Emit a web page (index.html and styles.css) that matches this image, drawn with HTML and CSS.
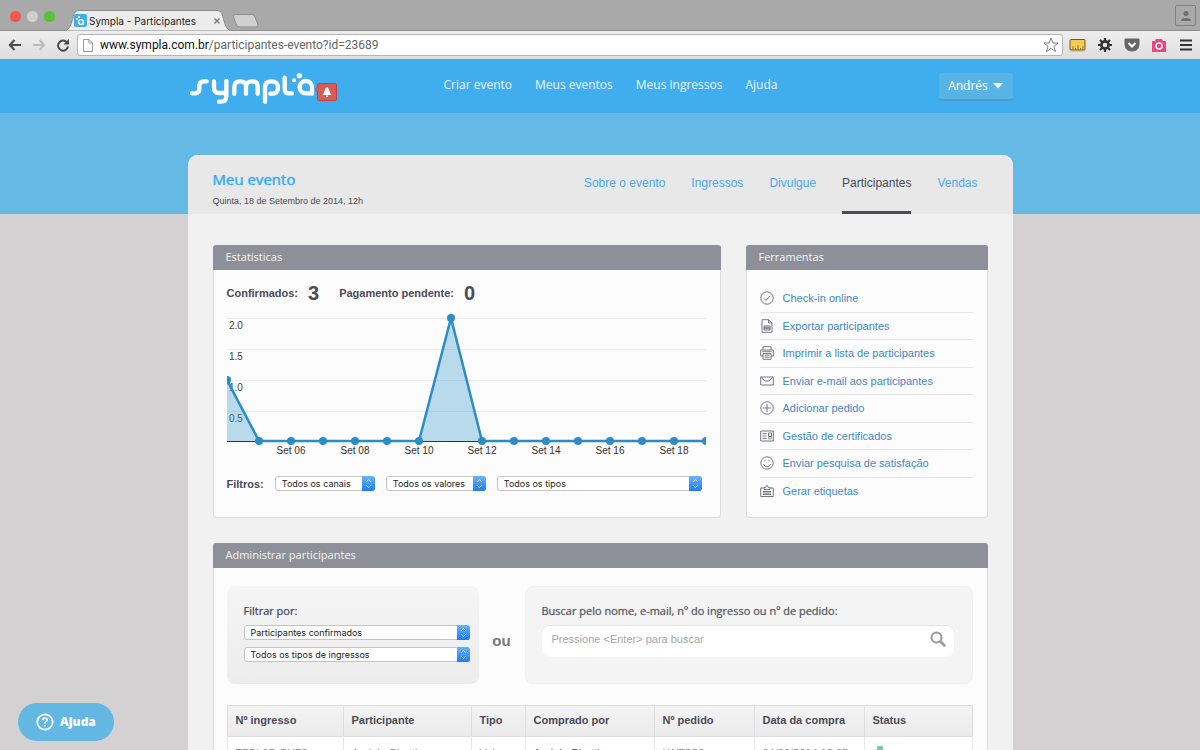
FILE: index.html
```html
<!DOCTYPE html>
<html lang="pt-BR">
<head>
<meta charset="utf-8">
<title>Sympla - Participantes</title>
<link rel="stylesheet" href="styles.css">
</head>
<body>
<div class="tabstrip">
  <div class="lights"><span class="light red"></span><span class="light gray"></span><span class="light green"></span></div>
  <div class="tab">
    <svg class="tab-shape" width="168" height="21" viewBox="0 0 168 21" aria-hidden="true"><path d="M0 21C5 20 6 17 8 11C10 4 10 1 15 .5H153C158 1 158 4 160 11C162 17 163 20 168 21Z" fill="#ececec" stroke="#8c8c8c"/></svg>
    <svg width="13" height="13" viewBox="0 0 13 13" aria-hidden="true"><rect width="13" height="13" rx="2" fill="#3fadee"/><circle cx="7" cy="8" r="2.4" fill="none" stroke="#fff" stroke-width="1.4"/><path d="M9.4 6V11" stroke="#fff" stroke-width="1.3"/><circle cx="3" cy="5" r=".9" fill="#fff"/><circle cx="5" cy="3" r="1" fill="#fff"/></svg>
    <span class="tab-title">Sympla - Participantes</span>
    <button class="tab-close" aria-label="Fechar aba"><svg width="6" height="6" viewBox="0 0 6 6"><path d="M.5 .5L5.500 5.500M5.500 .5L.5 5.500" stroke="#777" stroke-width="1.300"/></svg></button>
  </div>
  <button class="new-tab" aria-label="Nova aba"><svg width="27" height="14" viewBox="0 0 27 14"><path d="M3 .5H20Q22 .5 23 3L26 11Q26.500 13 24 13H8Q5.500 13 4.500 11L1.500 3Q1 .5 3 .5Z" fill="#d0d0d0" stroke="#8c8c8c"/></svg></button>
  <button class="profile" aria-label="Perfil"><svg width="12" height="12" viewBox="0 0 12 12"><circle cx="6" cy="3.500" r="2.500" fill="#707070"/><path d="M1 11Q1 8 6 8T11 11Z" fill="#707070"/></svg></button>
</div>
<div class="toolbar">
  <button class="tool" aria-label="Voltar"><svg width="14" height="14" viewBox="0 0 14 14"><path d="M13 7H2M6.500 2L1.800 7L6.500 12" fill="none" stroke="#4a4a4a" stroke-width="2"/></svg></button>
  <button class="tool" aria-label="Avançar"><svg width="14" height="14" viewBox="0 0 14 14"><path d="M1 7H12M7.500 2L12.200 7L7.500 12" fill="none" stroke="#bcbcbc" stroke-width="2"/></svg></button>
  <button class="tool" aria-label="Recarregar"><svg width="14" height="14" viewBox="0 0 14 14"><path d="M11 4.500A5 5 0 1 0 12 8.500" fill="none" stroke="#4a4a4a" stroke-width="2"/><path d="M13 1V6.500H7.500Z" fill="#4a4a4a"/></svg></button>
  <div class="address">
    <svg width="10" height="13" viewBox="0 0 10 13" aria-hidden="true"><path d="M.5 .5H6L9.500 4V12.500H.5ZM6 .5V4H9.500" fill="#fafafa" stroke="#999"/></svg>
    <span class="url"><b>www.sympla.com.br</b>/participantes-evento?id=23689</span>
    <button class="star" aria-label="Favoritar"><svg width="16" height="16" viewBox="0 0 16 16"><path d="M8 1L10 6H15L11 9.300L12.500 14.500L8 11.400L3.500 14.500L5 9.300L1 6H6Z" fill="#fff" stroke="#808080"/></svg></button>
  </div>
  <button class="tool ext" aria-label="Régua"><svg width="17" height="14" viewBox="0 0 17 14"><path d="M1 13.500H16" stroke="#ccc"/><rect x="1" y="1.500" width="15" height="10.500" rx="1" fill="#f4cc55" stroke="#6f5717"/><path d="M4 12V8M6.500 12V10M9 12V7M11.500 12V10M14 12V8" stroke="#a07a20"/></svg></button>
  <button class="tool ext" aria-label="Configurações"><svg width="16" height="16" viewBox="0 0 16 16"><circle cx="8" cy="8" r="3.600" fill="none" stroke="#333" stroke-width="2.600"/><path d="M8 1V4M8 12V15M1 8H4M12 8H15M3 3L5 5M11 11L13 13M13 3L11 5M5 11L3 13" stroke="#333" stroke-width="2.200"/></svg></button>
  <button class="tool ext" aria-label="Pocket"><svg width="16" height="14" viewBox="0 0 16 14"><path d="M1 1H15V6Q15 13 8 13T1 6Z" fill="#666" stroke="#666"/><path d="M4.500 5L8 8.500L11.500 5" fill="none" stroke="#fff" stroke-width="2"/></svg></button>
  <button class="tool ext" aria-label="Captura"><svg width="14" height="13" viewBox="0 0 14 13"><path d="M0 2H3L4 0H10L11 2H14V13H0Z" fill="#f2427f"/><circle cx="7" cy="7" r="3" fill="none" stroke="#fff" stroke-width="1.500"/></svg></button>
  <button class="tool menu" aria-label="Menu"><svg width="12" height="12" viewBox="0 0 12 12"><path d="M0 1.500H12M0 6H12M0 10.500H12" stroke="#333" stroke-width="2"/></svg></button>
</div>

<div class="site">
  <header class="site-header">
    <div class="wrap header-row">
      <a class="logo" href="#" aria-label="Sympla">
        <svg width="128" height="33" viewBox="24 36 384 99" fill="none" stroke="#fff" stroke-width="13" stroke-linecap="round" stroke-linejoin="round"><path d="M36 100H46Q58 99 58 88V78Q58 64 71 64H80M102 64V84Q102 99 117 99H138M139 63V108Q139 125 124 125H117M163 101V80Q163 64 181 64Q198 64 198 80V101M198 80Q198 64 216 64Q233 64 233 80V101M255 125V82Q255 64 274 64Q294 64 294 83T274 101H271M314 53V86Q314 100 328 100H336M396 101V82A18.500 18.500 0 1 0 377 100H396"/><circle cx="342" cy="61" r="6" fill="#fff" stroke="none"/><circle cx="358" cy="47" r="8" fill="#fff" stroke="none"/></svg>
        <span class="alert"><svg width="22" height="18" viewBox="0 0 22 18"><path d="M0 6.500L2.500 4V1.500Q2.500 .5 3.500 .5H20.500Q21.500 .5 21.500 1.500V16.500Q21.500 17.500 20.500 17.500H3.500Q2.500 17.500 2.500 16.500V9Z" fill="#da5a56" stroke="#b94643"/><path d="M7.500 12Q9.500 10 9.700 7Q10 5 11.500 5V4H12.500V5Q14 5 14.300 7Q14.500 10 16.500 12ZM11 12.500H13V14H11Z" fill="#fff"/></svg></span>
      </a>
      <nav class="main-nav"><a href="#">Criar evento</a><a href="#">Meus eventos</a><a href="#">Meus ingressos</a><a href="#">Ajuda</a></nav>
      <button class="user">Andrés <svg width="10" height="6" viewBox="0 0 10 6"><path d="M0 0H10L5 5.500Z" fill="#fff"/></svg></button>
    </div>
  </header>
  <div class="stage">
    <main class="wrap sheet">
      <div class="event-head">
        <div>
          <h1>Meu evento</h1>
          <p class="date">Quinta, 18 de Setembro de 2014, 12h</p>
        </div>
        <nav class="event-nav"><a href="#">Sobre o evento</a><a href="#">Ingressos</a><a href="#">Divulgue</a><a class="active" href="#">Participantes</a><a href="#">Vendas</a></nav>
      </div>
      <div class="content">
        <div class="top-row">
          <section class="panel stats">
            <h2>Estatísticas</h2>
            <div class="stats-body">
              <div class="totals"><span>Confirmados:</span><strong>3</strong><span>Pagamento pendente:</span><strong>0</strong></div>
              <svg class="chart" viewBox="0 0 479 150" role="img" aria-label="Participantes por dia">
                <path d="M0 6.500H479M0 37.500H479M0 68.500H479M0 99.500H479" stroke="#ececee"/>
                <g class="labels"><text x="2" y="17">2.0</text><text x="2" y="48">1.5</text><text x="2" y="79">1.0</text><text x="2" y="110">0.5</text></g>
                <path d="M0 129.500H479" stroke="#333"/>
                <path d="M0 68L32 129H0ZM192 129L224 6L255 129Z" fill="#3a9bcb" fill-opacity=".35"/>
                <path d="M0 68L32 129H192L224 6L255 129H479" fill="none" stroke="#2b8dc6" stroke-width="2.500" stroke-linejoin="round"/>
                <g fill="#2b8dc6"><circle cx="0" cy="68" r="4"/><circle cx="32" cy="129" r="4"/><circle cx="64" cy="129" r="4"/><circle cx="96" cy="129" r="4"/><circle cx="128" cy="129" r="4"/><circle cx="160" cy="129" r="4"/><circle cx="192" cy="129" r="4"/><circle cx="224" cy="6" r="4"/><circle cx="255" cy="129" r="4"/><circle cx="287" cy="129" r="4"/><circle cx="319" cy="129" r="4"/><circle cx="351" cy="129" r="4"/><circle cx="383" cy="129" r="4"/><circle cx="415" cy="129" r="4"/><circle cx="447" cy="129" r="4"/><circle cx="479" cy="129" r="4"/></g>
                <g class="labels days"><text x="64" y="142">Set 06</text><text x="128" y="142">Set 08</text><text x="192" y="142">Set 10</text><text x="255" y="142">Set 12</text><text x="319" y="142">Set 14</text><text x="383" y="142">Set 16</text><text x="447" y="142">Set 18</text></g>
              </svg>
              <div class="filters">
                <span class="filters-label">Filtros:</span>
                <span class="select narrow"><select aria-label="Canais"><option>Todos os canais</option></select><svg viewBox="0 0 12 15"><path d="M3.500 6L6 3.500L8.500 6M3.500 9L6 11.500L8.500 9"/></svg></span>
                <span class="select narrow"><select aria-label="Valores"><option>Todos os valores</option></select><svg viewBox="0 0 12 15"><path d="M3.500 6L6 3.500L8.500 6M3.500 9L6 11.500L8.500 9"/></svg></span>
                <span class="select wide"><select aria-label="Tipos"><option>Todos os tipos</option></select><svg viewBox="0 0 12 15"><path d="M3.500 6L6 3.500L8.500 6M3.500 9L6 11.500L8.500 9"/></svg></span>
              </div>
            </div>
          </section>
          <section class="panel tools">
            <h2>Ferramentas</h2>
            <ul>
              <li><svg viewBox="0 0 14 14"><circle cx="7" cy="7" r="6.200"/><path d="M4 7.500L6 9.500L10 5"/></svg><a href="#">Check-in online</a></li>
              <li><svg viewBox="0 0 14 14"><path d="M2 .7H8.500L12 4V13.300H2ZM8.500 .7V4H12M4 7H10V11H4ZM4 8.300H10M4 9.700H10"/></svg><a href="#">Exportar participantes</a></li>
              <li><svg viewBox="0 0 14 14"><path d="M3 4V.7H11V4M3 10H.7V4H13.300V10H11M3 7.500H11V13.300H3ZM4.500 9.200H9.500M4.500 11.200H9.500M2.500 5.700H11.500"/></svg><a href="#">Imprimir a lista de participantes</a></li>
              <li><svg viewBox="0 0 14 14"><path d="M.7 3H13.300V11H.7ZM.7 3L5 7H9L13.300 3"/></svg><a href="#">Enviar e-mail aos participantes</a></li>
              <li><svg viewBox="0 0 14 14"><circle cx="7" cy="7" r="6.200"/><path d="M7 3V11M3 7H11"/></svg><a href="#">Adicionar pedido</a></li>
              <li><svg viewBox="0 0 14 14"><path d="M.7 2H13.300V12H.7ZM2.500 4.500H6.500M2.500 7H6.500M2.500 9.500H6.500M8.500 4H11.500V7.500H8.500ZM9 8V10.500M11 8V10.500"/></svg><a href="#">Gestão de certificados</a></li>
              <li><svg viewBox="0 0 14 14"><circle cx="7" cy="7" r="6.200"/><path d="M3.500 8Q4.500 10.800 7 10.800T10.500 8M5 4V5.500M9 4V5.500"/></svg><a href="#">Enviar pesquisa de satisfação</a></li>
              <li><svg viewBox="0 0 14 14"><path d="M4 4H.7V12.500H13.300V4H10M4 5.500V3.500H5.500L7 1.200L8.500 3.500H10V5.500ZM3 7.500H11M3 9H11M3 10.500H11"/></svg><a href="#">Gerar etiquetas</a></li>
            </ul>
          </section>
        </div>
        <section class="panel manage">
          <h2>Administrar participantes</h2>
          <div class="manage-body">
            <div class="search-row">
              <div class="box filter-box">
                <label for="situacao">Filtrar por:</label>
                <span class="select"><select id="situacao"><option>Participantes confirmados</option></select><svg viewBox="0 0 12 15"><path d="M3.500 6L6 3.500L8.500 6M3.500 9L6 11.500L8.500 9"/></svg></span>
                <span class="select"><select aria-label="Tipo de ingresso"><option>Todos os tipos de ingressos</option></select><svg viewBox="0 0 12 15"><path d="M3.500 6L6 3.500L8.500 6M3.500 9L6 11.500L8.500 9"/></svg></span>
              </div>
              <span class="or">ou</span>
              <div class="box search-box">
                <label for="busca">Buscar pelo nome, e-mail, nº do ingresso ou nº de pedido:</label>
                <div class="search-field">
                  <input id="busca" type="text" placeholder="Pressione &lt;Enter&gt; para buscar">
                  <button aria-label="Buscar"><svg width="16" height="16" viewBox="0 0 16 16" fill="none" stroke="#999"><circle cx="6.500" cy="6.500" r="5" stroke-width="2"/><path d="M10.500 10.500L14.500 14.500" stroke-width="2.500" stroke-linecap="round"/></svg></button>
                </div>
              </div>
            </div>
            <table>
              <colgroup><col class="c1"><col class="c2"><col class="c3"><col class="c4"><col class="c5"><col class="c6"><col class="c7"></colgroup>
              <thead><tr><th>Nº ingresso</th><th>Participante</th><th>Tipo</th><th>Comprado por</th><th>Nº pedido</th><th>Data da compra</th><th>Status</th></tr></thead>
              <tbody><tr><td>TFBL9D-BYF8</td><td>Andrés Bhatti</td><td>Vale</td><td class="buyer">Andrés Bhatti</td><td>LWF8S8</td><td>04/09/2014 18:25</td><td><span class="mark"></span>Confirmado</td></tr></tbody>
            </table>
          </div>
        </section>
      </div>
    </main>
  </div>
</div>
<button class="help"><svg width="18" height="18" viewBox="0 0 18 18" fill="none" stroke="#fff"><circle cx="9" cy="9" r="7.700" stroke-width="1.700"/><path d="M6.800 7.300Q6.800 5 9 5T11.200 7Q11.200 8 10 8.700T9 10.500M9 12V13.500" stroke-width="1.500"/></svg>Ajuda</button>
</body>
</html>
```
FILE: styles.css
```css
* { box-sizing: border-box; }
body {
  margin: 0;
  height: 100vh;
  display: flex;
  flex-direction: column;
  overflow: hidden;
  font-family: "Liberation Sans", Arial, sans-serif;
  font-size: 11px;
  color: #4a4b59;
}
h1, h2, p, ul { margin: 0; padding: 0; }
a { text-decoration: none; }
button { border: 0; padding: 0; background: none; font: inherit; color: inherit; }
svg { display: block; flex: none; }

/* Browser window */
.tabstrip {
  display: flex;
  align-items: flex-end;
  height: 31px;
  flex: none;
  background: #a9a9a9;
  border-bottom: 1px solid #8c8c8c;
}
.lights { display: flex; gap: 6px; padding: 0 9px 8px 10px; }
.light { width: 11px; height: 11px; border-radius: 50%; }
.red { background: #f0564f; }
.gray { background: #d0d0d0; }
.green { background: #57c038; }
.tab {
  position: relative;
  display: flex;
  align-items: center;
  gap: 2px;
  width: 168px;
  height: 21px;
  padding: 0 10px;
  margin-bottom: -1px;
  font: 10px/14px Inter, sans-serif;
  color: #222;
}
.tab > * { position: relative; }
.tab .tab-shape { position: absolute; left: 0; top: 0; }
.tab-title { white-space: nowrap; }
.tab-close { margin-left: auto; margin-right: 2px; }
.new-tab { margin-bottom: 2px; }
.profile {
  display: grid;
  place-items: center;
  width: 21px;
  height: 21px;
  margin: 0 4px 4px auto;
  border: 1px solid #808080;
  border-radius: 2px;
}
.toolbar {
  display: flex;
  align-items: center;
  height: 29px;
  flex: none;
  padding: 0 8px;
  gap: 10px;
  background: linear-gradient(#eeeeee, #dedede);
  border-bottom: 1px solid #8b969d;
}
.address {
  display: flex;
  align-items: center;
  flex: 1;
  height: 22px;
  margin: 0 -4px 0 -3px;
  padding: 0 3px 0 5px;
  gap: 7px;
  background: #fff;
  border: 1px solid #b5b5b5;
  border-radius: 3px;
}
.url { font: 12px/16px Roboto, sans-serif; color: #666; }
.url b { font-weight: 400; color: #111; }
.star { margin-left: auto; }
.toolbar .ext { width: 17px; display: flex; justify-content: center; }
.menu { margin-left: 3px; }

/* Site header */
.site { flex: 1; min-height: 0; overflow: hidden; background: #d3d1d2; }
.wrap { width: 100%; max-width: 825px; margin: 0 auto; }
.site-header { background: #3fadee; }
.header-row { display: flex; align-items: flex-start; height: 53px; }
.logo { display: flex; padding: 12px 0 0; }
.alert { margin-top: 11px; margin-left: -1px; }
.main-nav {
  display: flex;
  gap: 23px;
  margin-left: 107px;
  padding-top: 16px;
  font: 12px/18px "Open Sans", sans-serif;
}
.main-nav a { color: #e8f6ff; }
.user {
  display: flex;
  align-items: center;
  justify-content: center;
  gap: 5px;
  width: 74px;
  height: 28px;
  margin: 13px 0 0 auto;
  border-radius: 3px;
  background: #58b4e4;
  border-bottom: 2px solid #489cca;
  color: #fff;
  font: 12px/18px "Open Sans", sans-serif;
}
.stage {
  padding-top: 42px;
  background: linear-gradient(#64b9e5, #64b9e5) no-repeat 0 0 / 100% 101px;
}

/* Event sheet */
.sheet { background: #f1f1f2; border-radius: 10px 10px 0 0; }
.event-head {
  display: flex;
  justify-content: space-between;
  height: 59px;
  padding: 0 35px 0 25px;
  background: #e8e8e8;
  border-top: 1px solid #f4f4f4;
  border-radius: 10px 10px 0 0;
}
h1 {
  padding-top: 13px;
  font: 400 15px/20px "Open Sans", sans-serif;
  text-shadow: 0 0 1px #3fadee;
  color: #3fadee;
}
.date { padding-top: 5px; font-size: 9px; line-height: 14px; }
.event-nav { display: flex; gap: 26px; font-size: 12px; line-height: 16px; }
.event-nav a { padding-top: 19px; height: 58px; color: #4ba9e8; border-bottom: 3px solid transparent; }
.event-nav .active { color: #4a4b59; border-color: #4a4b59; }
.content { padding: 31px 25px 0; }
.top-row { display: flex; gap: 25px; }
.panel {
  border: 1px solid #dcdcde;
  border-top: 0;
  border-radius: 3px 3px 4px 4px;
  background: #fcfcfc;
}
h2 {
  margin: 0 -1px;
  padding: 0 13px 1px;
  border-radius: 3px 3px 0 0;
  background: #8d9099;
  color: #f4f4f4;
  font: 11px/24px "Open Sans", sans-serif;
}
.stats { flex: 1; height: 273px; }
.stats-body { padding: 11px 14px 0 13px; }
.totals {
  display: flex;
  align-items: center;
  height: 24px;
  font-weight: 700;
}
.totals strong { margin: 0 20px 0 10px; font-size: 20px; }
.chart { width: 100%; height: auto; margin-top: 7px; overflow: hidden; }
.labels { font-size: 10px; fill: #444; }
.days { text-anchor: middle; fill: #333; }
.filters { display: flex; align-items: center; padding: 14px 4px 0 0; gap: 11px; }
.filters-label { font-weight: 700; }

.select { position: relative; display: block; height: 15px; }
.narrow { width: 100px; }
.wide { flex: 1; }
.select select {
  appearance: none;
  display: block;
  width: 100%;
  height: 15px;
  padding: 0 14px 0 6px;
  border: 1px solid #c4c4c4;
  border-radius: 3px;
  background: #fff;
  color: #222;
  font: 9px/13px Inter, sans-serif;
}
.select svg {
  position: absolute;
  right: 0;
  top: 0;
  width: 13px;
  height: 15px;
  border-radius: 0 3px 3px 0;
  background: linear-gradient(#6cb3fa, #1a7cf8);
  fill: none;
  stroke: #fff;
  pointer-events: none;
}

.tools { display: flex; flex-direction: column; width: 242px; }
.tools ul { flex: 1; display: flex; flex-direction: column; padding: 15px 14px 12px 13px; list-style: none; }
.tools li { flex: 1; display: flex; align-items: center; gap: 9px; border-bottom: 1px solid #e6e6e8; }
.tools li:last-child { border-bottom-color: transparent; }
.tools li svg { width: 14px; height: 14px; fill: none; stroke: #777981; }
.tools a { color: #4289c4; }

/* Participants */
.manage { margin-top: 25px; }
.manage-body { padding: 18px 14px 18px 13px; }
.search-row { display: flex; align-items: stretch; }
.box { height: 98px; padding: 17px; border-radius: 8px; background: linear-gradient(#f5f5f5, #ececec); }
.box label { display: block; font: 400 11px/16px "Open Sans", sans-serif; text-shadow: 0 0 1px #8a8b92; }
.filter-box { width: 252px; padding-right: 9px; }
.filter-box .select { margin-top: 7px; }
.filter-box label + .select { margin-top: 6px; }
.or { align-self: center; width: 46px; padding-top: 12px; text-align: center; font: 700 15px/20px "Liberation Sans", sans-serif; color: #77777c; }
.search-box { flex: 1; background: #f4f4f4; border: 1px solid #f0f0f0; padding: 16px; }
.search-box label { color: #5c5d64; }
.search-field {
  display: flex;
  align-items: center;
  height: 32px;
  margin: 6px 2px 0 0;
  padding: 0 8px 5px 10px;
  background: #fff;
  border-top: 1px solid #e6e6e6;
  border-radius: 8px;
}
.search-field input { flex: 1; min-width: 0; border: 0; padding: 0; background: none; font: 11px/16px "Liberation Sans", sans-serif; }
.search-field input::placeholder { color: #a8a8a8; }
table { width: 100%; margin-top: 21px; border-collapse: collapse; table-layout: fixed; font-size: 11px; }
th, td { padding: 0 0 0 8px; text-align: left; border: 1px solid #dededf; white-space: nowrap; }
th { height: 31px; padding-bottom: 2px; background: linear-gradient(#f3f3f3, #ebebeb); }
td { height: 33px; color: #85868c; border-color: #e8e8e8; background: #fff; }
.buyer { color: #4a4b59; }
.mark { display: inline-block; width: 6px; height: 12px; margin: 0 9px 0 4px; border-radius: 1px; background: #7cc9a8; }
.c1 { width: 116px; }
.c2 { width: 128px; }
.c3 { width: 54px; }
.c4 { width: 129px; }
.c5 { width: 100px; }
.c6 { width: 110px; }

/* Floating help button */
.help {
  position: fixed;
  left: 18px;
  bottom: 9px;
  display: flex;
  align-items: center;
  gap: 6px;
  height: 38px;
  padding: 0 18px;
  border-radius: 19px;
  background: #62b8e3;
  color: #fff;
  font: 800 12px/18px "Open Sans", sans-serif;
}
```
